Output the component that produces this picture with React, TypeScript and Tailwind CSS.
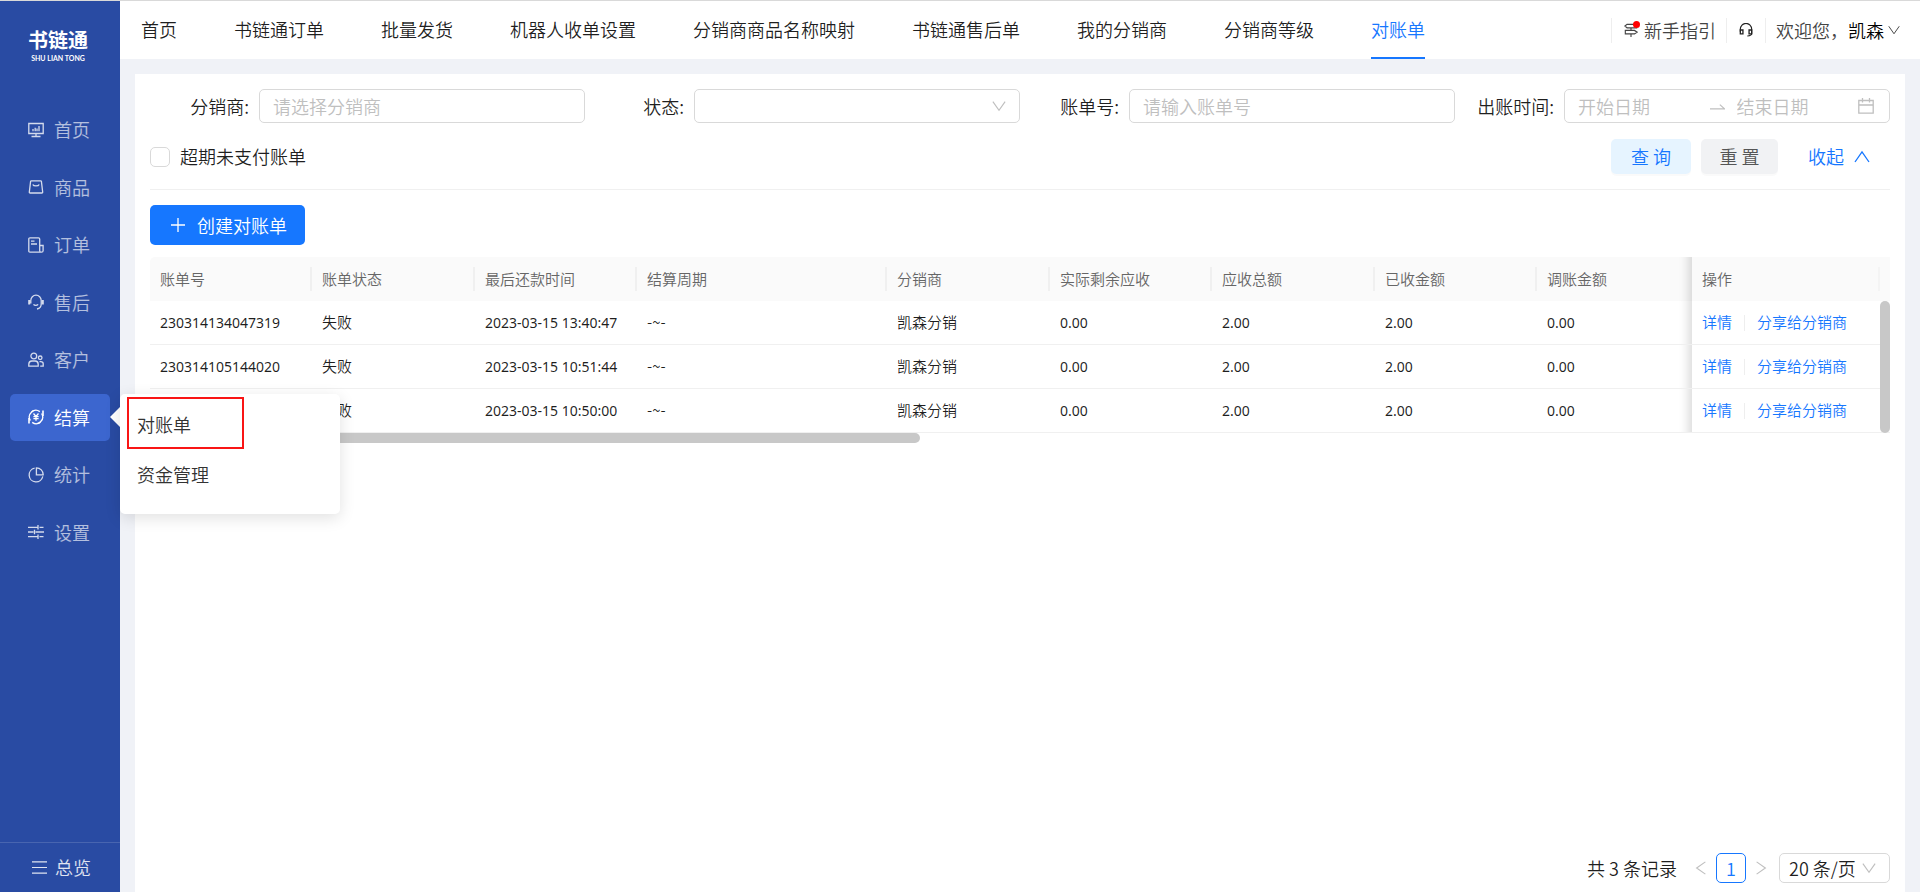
import type { ReactNode } from 'react';

type Bill = {
  id?: string;
  status: string;
  dueAt: string;
  period: string;
  distributor: string;
  remaining: string;
  total: string;
  received: string;
  adjusted: string;
};

const TABS = [
  '首页',
  '书链通订单',
  '批量发货',
  '机器人收单设置',
  '分销商商品名称映射',
  '书链通售后单',
  '我的分销商',
  '分销商等级',
  '对账单',
];
const ACTIVE_TAB = '对账单';

const COLUMNS = [
  { title: '账单号', width: 'w-[162px]' },
  { title: '账单状态', width: 'w-[163px]' },
  { title: '最后还款时间', width: 'w-[162px]' },
  { title: '结算周期', width: 'w-[250px]' },
  { title: '分销商', width: 'w-[163px]' },
  { title: '实际剩余应收', width: 'w-[162px]' },
  { title: '应收总额', width: 'w-[163px]' },
  { title: '已收金额', width: 'w-[162px]' },
  { title: '调账金额', width: '' },
];

const amounts = { period: '-~-', distributor: '凯森分销', remaining: '0.00', total: '2.00', received: '2.00', adjusted: '0.00' };

const BILLS: Bill[] = [
  { id: '230314134047319', status: '失败', dueAt: '2023-03-15 13:40:47', ...amounts },
  { id: '230314105144020', status: '失败', dueAt: '2023-03-15 10:51:44', ...amounts },
  { status: '失败', dueAt: '2023-03-15 10:50:00', ...amounts },
];

function Icon({ children, className = 'size-4' }: { children: ReactNode; className?: string }) {
  return (
    <svg
      viewBox="0 0 16 16"
      className={`shrink-0 ${className}`}
      fill="none"
      stroke="currentColor"
      strokeWidth="1.3"
      aria-hidden="true"
    >
      {children}
    </svg>
  );
}

function Chevron({ className }: { className: string }) {
  return (
    <Icon className={className}>
      <path d="M1 3 8 13l7-10" />
    </Icon>
  );
}

const MENU = [
  {
    label: '首页',
    icon: (
      <>
        <path d="M.8 1.500h14.400v10H.8zM8 11.500v3M3.500 14.500h9" />
        <path d="M5 9.200V7M7.200 9.200V5.800M9 9.200V6.500M11 9.200V4" />
      </>
    ),
  },
  {
    label: '商品',
    icon: (
      <>
        <path d="M3.300 1.800h9.400q.6 0 .7.6l1.300 10.800q0 .8-.8.8H2.100q-.8 0-.8-.8L2.600 2.400q.1-.6.7-.6z" />
        <path d="M4.800 5.400c.8 2 5.600 2 6.400 0" />
      </>
    ),
  },
  {
    label: '订单',
    icon: (
      <>
        <path d="M13 15.200H2q-1.200 0-1.200-1.200V2Q.8.800 2 .800h8.500q1.200 0 1.200 1.200v11.700q0 1.500 1.700 1.500t1.700-1.500V8.500h-3.400" />
        <path d="M3 4.200h3.500M3 7h6" />
      </>
    ),
  },
  {
    label: '售后',
    icon: (
      <>
        <path d="M2.800 9.500V6.400a5.200 5.200 0 0 1 10.400 0V10c0 2.500-1.600 4.600-4.200 5" />
        <path d="M1.200 6v4.500M14.800 6v4.500" strokeWidth="2" />
        <path d="M5.500 10.300c1 1.400 3.500 1.400 4.600 0" />
      </>
    ),
  },
  {
    label: '客户',
    icon: (
      <>
        <circle cx="5.800" cy="4" r="2.900" />
        <path d="M.8 14.200v-2q0-3.200 3-3.200h3.400q3 0 3 3.200v2z" />
        <circle cx="12.200" cy="5.800" r="1.800" />
        <path d="M11.500 9.600h1.300q2.400 0 2.400 2.200v2.400h-3" />
      </>
    ),
  },
  {
    label: '结算',
    icon: (
      <>
        <path d="M2.400 11.500A6.600 6.600 0 0 1 11.800 2.600M13.600 4.500A6.600 6.600 0 0 1 4.200 13.400" />
        <path d="M3.500 2.800 5.500 1.500M12.500 13.200l-2 1.300" />
        <path d="M15 1.500v5.500M1 9v5.500" strokeWidth="1.600" />
        <path d="M5.500 4.500 8 7.400l2.500-2.900M8 7.400v4.400M5.400 7.600h5.200M5.400 9.700h5.200" />
      </>
    ),
  },
  {
    label: '统计',
    icon: (
      <>
        <path d="M6.600 1.200A6.900 6.900 0 1 0 14.800 9.400" />
        <path d="M8.400.8v7h6.800A6.800 6.800 0 0 0 8.400.8z" />
      </>
    ),
  },
  {
    label: '设置',
    icon: <path d="M0 3.300h9.500M11.500 3.300H15.500M10 1v4.600M0 8h5.500M7.500 8H16M6.500 5.700v4.600M0 12.700h9.500M11.500 12.700h4M10 10.400V15" />,
  },
];
const ACTIVE_MENU = '结算';

function Sidebar() {
  return (
    <aside className="flex w-[120px] shrink-0 flex-col bg-[#294ba3]">
      <div className="flex h-[105px] flex-col items-center pt-[25px] pr-1 text-white">
        <span className="text-[20px] leading-7 font-bold">书链通</span>
        <span className="font-[Lato] text-[7px] leading-2 font-bold">SHU LIAN TONG</span>
      </div>
      <nav className="flex h-[450px] flex-col justify-between px-[10px]">
        {MENU.map(({ label, icon }) => (
          <div key={label} className="relative">
            <a
              href="#"
              className={`flex h-[47px] items-center gap-[10px] rounded-[5px] pl-[18px] text-[18px] ${
                label === ACTIVE_MENU ? 'bg-[#3c66cf] text-white' : 'text-white/65'
              }`}
            >
              <Icon className={label === ACTIVE_MENU ? 'size-4' : 'size-4 text-white/80'}>{icon}</Icon>
              {label}
            </a>
            {label === ACTIVE_MENU && <SubMenu />}
          </div>
        ))}
      </nav>
      <a
        href="#"
        className="mt-auto flex h-[50px] items-center gap-2 border-t border-white/15 pl-8 text-[18px] text-white/85"
      >
        <Icon className="size-[15px]">
          <path d="M0 2h16M0 8h16M0 14h16" />
        </Icon>
        总览
      </a>
    </aside>
  );
}

function SubMenu() {
  return (
    <>
      <span className="absolute top-[13px] left-[100px] size-0 border-y-[10px] border-r-[10px] border-y-transparent border-r-white" />
      <div className="absolute top-0 left-[110px] z-20 flex h-[120px] w-[220px] flex-col rounded-[5px] bg-white px-[7px] pt-[3px] text-[18px] text-[#333] shadow-[0_4px_16px_rgba(0,0,0,0.12)]">
        <a href="#" className="flex h-[52px] w-[117px] items-center border-2 border-[#f91515] pt-1 pl-2">
          对账单
        </a>
        <a href="#" className="flex h-[52px] items-center pl-[10px]">
          资金管理
        </a>
      </div>
    </>
  );
}

function Header() {
  return (
    <header className="flex h-[58px] items-stretch justify-between bg-white pr-5 pl-[21px] text-[18px]">
      <nav className="flex gap-[57px]">
        {TABS.map((tab) => (
          <a
            key={tab}
            href="#"
            className={`flex items-center border-b-2 whitespace-nowrap ${
              tab === ACTIVE_TAB ? 'border-[#1677ff] text-[#1677ff]' : 'border-transparent text-black/88'
            }`}
          >
            {tab}
          </a>
        ))}
      </nav>
      <div className="flex h-[25px] items-center self-center whitespace-nowrap text-[#444]">
        <a href="#" className="flex h-[25px] items-center gap-[6px] border-l border-[#eee] pr-[10px] pl-3">
          <span className="relative flex">
            <Icon className="size-[14px]">
              <path d="M3.500 1.500h11v4h-11l-2.500-2zM1.500 8.500H12l3 2-3 2H1.500zM8 5.500v3M8 12.500V16" />
            </Icon>
            <span className="absolute -top-[2px] -right-[2px] size-[7px] rounded-full bg-[#ff0000]" />
          </span>
          新手指引
        </a>
        <a href="#" aria-label="客服" className="flex h-[25px] items-center border-x border-[#eee] px-3 text-[#222]">
          <Icon className="size-[14px]">
            <path d="M1.500 10V7a6.500 6.500 0 0 1 13 0v5q0 2.500-5 2.800" />
            <path d="M1.500 8h3v4.500h-3zM11.500 8h3v4.500h-3z" strokeWidth="1.500" />
          </Icon>
        </a>
        <button type="button" className="flex items-center pl-[10px]">
          欢迎您，<span className="text-black">凯森</span>
          <Chevron className="ml-1 size-3" />
        </button>
      </div>
    </header>
  );
}

function Field({ id, label, children }: { id: string; label: string; children: ReactNode }) {
  return (
    <div className="flex items-center">
      <label htmlFor={id} className="w-[109px] shrink-0 pr-[10px] text-right">
        {label}:
      </label>
      {children}
    </div>
  );
}

const inputClass =
  'h-[34px] w-full min-w-0 rounded-[5px] border border-[#d9d9d9] bg-white px-[13px] text-[18px] placeholder:text-[#bfbfbf]';

function Filters() {
  return (
    <form className="border-b border-[#f0f0f0] pb-[15px] text-[18px] text-black/88">
      <div className="grid grid-cols-4">
        <Field id="distributor" label="分销商">
          <input id="distributor" placeholder="请选择分销商" className={inputClass} />
        </Field>
        <Field id="status" label="状态">
          <div className="relative w-full">
            <select id="status" className={`${inputClass} block appearance-none`} />
            <Chevron className="pointer-events-none absolute top-[10px] right-[14px] size-[14px] text-[#bfbfbf]" />
          </div>
        </Field>
        <Field id="bill-no" label="账单号">
          <input id="bill-no" placeholder="请输入账单号" className={inputClass} />
        </Field>
        <Field id="date-from" label="出账时间">
          <div className="flex h-[34px] w-full min-w-0 items-center rounded-[5px] border border-[#d9d9d9] pr-[15px] pl-[13px] text-[#bfbfbf]">
            <input id="date-from" placeholder="开始日期" className="w-0 flex-[13] placeholder:text-[#bfbfbf]" />
            <Icon className="mr-3 size-[15px]">
              <path d="M0 10.500h15.500L10.500 6" />
            </Icon>
            <input aria-label="结束日期" placeholder="结束日期" className="w-0 flex-[12] placeholder:text-[#bfbfbf]" />
            <Icon className="size-4">
              <path d="M.8 2.500h14.400v12.700H.8zM.8 7h14.400M4.500 0v4.500M11.500 0v4.500" />
            </Icon>
          </div>
        </Field>
      </div>
      <div className="mt-4 flex h-[35px] items-center">
        <label className="flex items-center gap-[10px]">
          <input type="checkbox" className="size-5 appearance-none rounded-[5px] border border-[#d9d9d9]" />
          超期未支付账单
        </label>
        <button
          type="button"
          className="ml-auto h-[35px] w-20 rounded-[5px] bg-[#e6f4ff] text-[#1677ff] shadow-[0_2px_0_rgba(0,0,0,0.02)]"
        >
          查 询
        </button>
        <button
          type="button"
          className="ml-[10px] h-[35px] w-[77px] rounded-[5px] bg-[#f1f2f4] text-[#555] shadow-[0_2px_0_rgba(0,0,0,0.02)]"
        >
          重 置
        </button>
        <button type="button" className="mr-5 ml-[30px] flex items-center gap-[10px] text-[#1677ff]">
          收起
          <Chevron className="size-4 rotate-180" />
        </button>
      </div>
    </form>
  );
}

const cellClass = 'overflow-hidden border-b border-[#f0f0f0] px-[10px] whitespace-nowrap';
const numberClass = `${cellClass} font-[Noto_Sans] text-[14px] font-normal`;
const edgeClass = 'shadow-[inset_-14px_0_10px_-10px_rgba(5,5,5,0.14)]';

function BillTable() {
  return (
    <div className="relative mt-3 text-[15px] text-black/88">
      <table className="w-full table-fixed border-separate border-spacing-0 text-left">
        <thead className="bg-[#fafafa] text-[#666]">
          <tr className="h-11">
            {COLUMNS.map(({ title, width }, i) => (
              <th
                key={title}
                className={`p-0 font-[350] ${width} ${i === 0 ? 'rounded-tl-[5px]' : ''} ${
                  i === COLUMNS.length - 1 ? edgeClass : ''
                }`}
              >
                <div
                  className={`flex h-6 items-center pl-[10px] ${
                    i === COLUMNS.length - 1 ? '' : 'border-r-2 border-[#f0f0f0]'
                  }`}
                >
                  {title}
                </div>
              </th>
            ))}
            <th className="w-[198px] p-0 pr-[10px] font-[350]">
              <div className="flex h-6 items-center border-r-2 border-[#f4f4f4] pl-[10px]">操作</div>
            </th>
          </tr>
        </thead>
        <tbody>
          {BILLS.map((bill) => (
            <tr key={bill.dueAt} className="h-11">
              <td className={numberClass}>{bill.id}</td>
              <td className={cellClass}>{bill.status}</td>
              <td className={numberClass}>{bill.dueAt}</td>
              <td className={cellClass}>{bill.period}</td>
              <td className={cellClass}>{bill.distributor}</td>
              <td className={numberClass}>{bill.remaining}</td>
              <td className={numberClass}>{bill.total}</td>
              <td className={numberClass}>{bill.received}</td>
              <td className={`${numberClass} ${edgeClass}`}>{bill.adjusted}</td>
              <td className={`${cellClass} text-[#1677ff]`}>
                <div className="flex items-center">
                  <a href="#">详情</a>
                  <span className="mx-3 h-4 w-px bg-[#eee]" />
                  <a href="#">分享给分销商</a>
                </div>
              </td>
            </tr>
          ))}
        </tbody>
      </table>
      <div className="absolute top-11 right-0 bottom-[10px] w-[10px] rounded-full bg-[#c8c8c8]" />
      <div className="h-[10px] w-[770px] rounded-full bg-[#c8c8c8]" />
    </div>
  );
}

function Pagination() {
  return (
    <div className="mt-auto flex h-[30px] items-center justify-end text-[18px] text-black/88">
      <span>共 3 条记录</span>
      <button type="button" aria-label="上一页" className="ml-[17px] text-[#bfbfbf]">
        <Chevron className="size-[14px] rotate-90" />
      </button>
      <button type="button" className="mx-2 size-[30px] rounded-[5px] border border-[#1677ff] text-[#1677ff]">
        1
      </button>
      <button type="button" aria-label="下一页" className="text-[#bfbfbf]">
        <Chevron className="size-[14px] -rotate-90" />
      </button>
      <div className="relative ml-[11px]">
        <select
          aria-label="每页条数"
          className="block h-[30px] w-[111px] appearance-none rounded-[5px] border border-[#d9d9d9] bg-white pl-[9px]"
        >
          <option>20 条/页</option>
        </select>
        <Chevron className="pointer-events-none absolute top-2 right-[14px] size-[14px] text-[#bfbfbf]" />
      </div>
    </div>
  );
}

export default function App() {
  return (
    <div className="flex min-h-screen border-t border-[#d9d9d9] bg-[#f0f2f7] font-['Noto_Sans_CJK_SC',sans-serif] font-[350]">
      <Sidebar />
      <div className="flex min-w-0 flex-1 flex-col">
        <Header />
        <main className="mx-[15px] mt-[15px] flex flex-1 flex-col bg-white p-[15px] pb-[9px]">
          <Filters />
          <button
            type="button"
            className="mt-[15px] flex h-10 w-[155px] items-center gap-3 self-start rounded-[5px] bg-[#1677ff] pl-[21px] text-[18px] text-white"
          >
            <Icon className="size-[14px]">
              <path d="M8 0v16M0 8h16" strokeWidth="1.500" />
            </Icon>
            创建对账单
          </button>
          <BillTable />
          <Pagination />
        </main>
      </div>
    </div>
  );
}
